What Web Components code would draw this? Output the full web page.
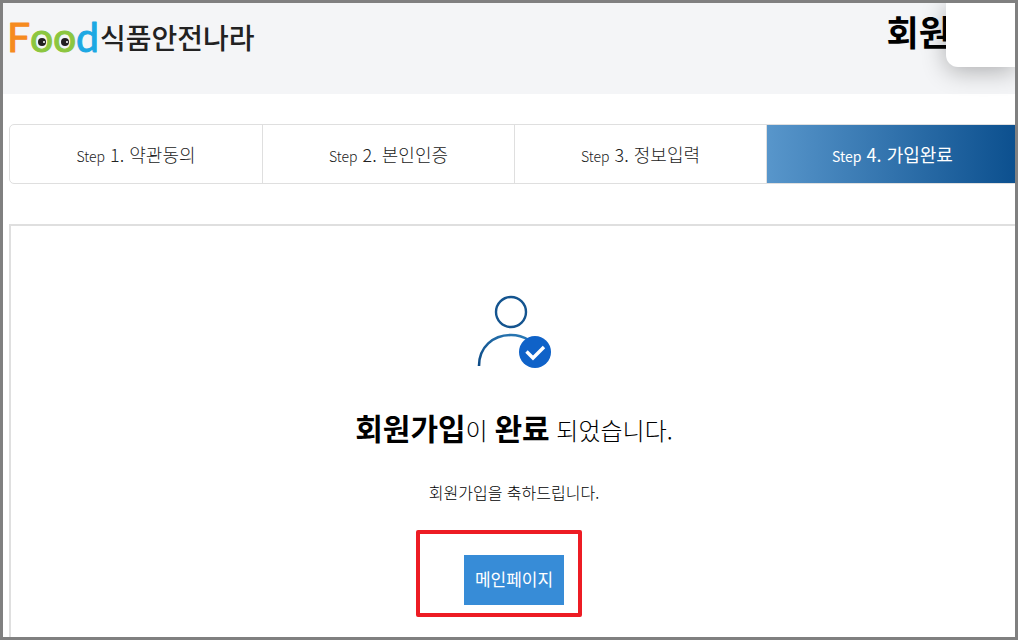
<!DOCTYPE html>
<html lang="ko">
<head>
<meta charset="utf-8">
<meta name="viewport" content="width=device-width, initial-scale=1">
<title>식품안전나라 - 회원가입</title>
<style>
  body {
    background-color: #ffffff;
    color: #000000;
    font-family: 'Noto Sans CJK KR', sans-serif;
    margin: 0;
  }

  food-complete b {
    font-size: 30px;
    font-weight: 700;
    line-height: 1;
  }
</style>
</head>
<body>
<food-page>
  <food-header slot="header">회원</food-header>
  <food-steps>
    <food-step number="1">약관동의</food-step>
    <food-step number="2">본인인증</food-step>
    <food-step number="3">정보입력</food-step>
    <food-step number="4" selected>가입완료</food-step>
  </food-steps>
  <food-complete>
    <span slot="title"><b>회원가입</b>이 <b>완료</b> 되었습니다.</span>
    <span slot="message">회원가입을 축하드립니다.</span>
    <food-button slot="action" marked>메인페이지</food-button>
  </food-complete>
</food-page>

<script>
class FoodPage extends HTMLElement {
  constructor() {
    super();

    const template = document.createElement( 'template' )
    template.innerHTML = /* template */ `
      <style>
        :host {
          border: solid 3px #808080;
          box-sizing: border-box;
          display: flex;
          flex-direction: column;
          min-height: 100vh;
          overflow: hidden;
        }

        main {
          display: flex;
          flex-direction: column;
          flex-grow: 1;
          gap: 40px;
          /* Runs on past the right edge */
          margin: 30px -4px 0 6px;
        }
      </style>
      <slot name="header"></slot>
      <main>
        <slot></slot>
      </main>
    `;

    // Root
    const shadowRoot = this.attachShadow( {mode: 'open'} );
    shadowRoot.appendChild( template.content.cloneNode( true ) );
  }
}

window.customElements.define( 'food-page', FoodPage );

class FoodLogo extends HTMLElement {
  constructor() {
    super();

    const template = document.createElement( 'template' )
    template.innerHTML = /* template */ `
      <style>
        :host {
          display: block;
        }

        a {
          align-items: center;
          color: #222222;
          display: flex;
          font-size: 28px;
          font-weight: 500;
          line-height: 40px;
          text-decoration: none;
        }

        svg {
          display: block;
          overflow: visible;
        }

        text {
          font-family: Lato, sans-serif;
          font-size: 41px;
          font-weight: 400;
          paint-order: stroke;
          stroke-linejoin: round;
          stroke-width: 1px;
        }
      </style>
      <a href="#">
        <svg width="91" height="56" viewBox="0 0 91 56" role="img">
          <text y="43" x="-2 21 44 67"><tspan fill="#f68b1f" stroke="#f68b1f">F</tspan><tspan fill="#8cc63f" stroke="#8cc63f">oo</tspan><tspan fill="#1ca8e3" stroke="#1ca8e3">d</tspan></text>
          <g fill="#231f20">
            <circle cx="33" cy="33" r="4"/>
            <circle cx="56" cy="33" r="4"/>
          </g>
          <g fill="#ffffff">
            <circle cx="35" cy="33" r="1"/>
            <circle cx="58" cy="33" r="1"/>
          </g>
        </svg>
        <span>식품안전나라</span>
      </a>
    `;

    // Root
    const shadowRoot = this.attachShadow( {mode: 'open'} );
    shadowRoot.appendChild( template.content.cloneNode( true ) );
  }
}

window.customElements.define( 'food-logo', FoodLogo );

class FoodHeader extends HTMLElement {
  constructor() {
    super();

    const template = document.createElement( 'template' )
    template.innerHTML = /* template */ `
      <style>
        :host {
          display: block;
          position: relative;
        }

        header {
          align-items: flex-start;
          background-color: #f4f5f7;
          box-sizing: border-box;
          display: flex;
          justify-content: space-between;
          min-height: 91px;
          padding: 6px 64px 0 6px;
        }

        h1 {
          font-size: 35px;
          font-weight: 700;
          line-height: 44px;
          margin: 0;
        }

        /* Bubble over the corner */
        aside {
          background-color: #ffffff;
          border-bottom-left-radius: 12px;
          box-shadow: 0 4px 24px rgba( 0, 0, 0, 0.30 );
          height: 64px;
          position: absolute;
          right: 0;
          top: 0;
          width: 69px;
        }
      </style>
      <header>
        <food-logo></food-logo>
        <h1><slot></slot></h1>
      </header>
      <aside></aside>
    `;

    // Root
    const shadowRoot = this.attachShadow( {mode: 'open'} );
    shadowRoot.appendChild( template.content.cloneNode( true ) );
  }
}

window.customElements.define( 'food-header', FoodHeader );

class FoodSteps extends HTMLElement {
  constructor() {
    super();

    const template = document.createElement( 'template' )
    template.innerHTML = /* template */ `
      <style>
        :host {
          display: block;
        }

        nav {
          border: solid 1px #dfdfdf;
          border-radius: 5px;
          display: grid;
          grid-template-columns: repeat( 4, 1fr );
          overflow: hidden;
        }
      </style>
      <nav>
        <slot></slot>
      </nav>
    `;

    // Root
    const shadowRoot = this.attachShadow( {mode: 'open'} );
    shadowRoot.appendChild( template.content.cloneNode( true ) );
  }
}

window.customElements.define( 'food-steps', FoodSteps );

class FoodStep extends HTMLElement {
  constructor() {
    super();

    const template = document.createElement( 'template' )
    template.innerHTML = /* template */ `
      <style>
        :host {
          border-left: solid 1px #dfdfdf;
          color: #222222;
          display: block;
          font-size: 18px;
          font-weight: 300;
          line-height: 58px;
          text-align: center;
        }

        :host( :first-child ) {
          border-left: none;
        }

        :host( [selected] ) {
          background-clip: padding-box;
          background-image: linear-gradient( to right, #5896cb, #0b4f8e );
          color: #ffffff;
          font-weight: 400;
        }

        small {
          font-size: 14px;
          line-height: 1;
        }
      </style>
      <small>Step</small> <span></span>. <slot></slot>
    `;

    // Root
    const shadowRoot = this.attachShadow( {mode: 'open'} );
    shadowRoot.appendChild( template.content.cloneNode( true ) );

    // Elements
    this.$number = shadowRoot.querySelector( 'span' );
  }

  // When things change
  _render() {
    this.$number.textContent = this.number;
  }

  // Setup
  connectedCallback() {
    this._render();
  }

  // Watched attributes
  static get observedAttributes() {
    return ['number'];
  }

  // Observed tag attribute has changed
  // Update render
  attributeChangedCallback( name, old, value ) {
    this._render();
  }

  // Attributes
  // Reflected
  get number() {
    return this.getAttribute( 'number' );
  }

  set number( value ) {
    this.setAttribute( 'number', value );
  }
}

window.customElements.define( 'food-step', FoodStep );

class FoodComplete extends HTMLElement {
  constructor() {
    super();

    const template = document.createElement( 'template' )
    template.innerHTML = /* template */ `
      <style>
        :host {
          display: flex;
          flex-grow: 1;
        }

        section {
          align-items: center;
          border: solid 2px #dfdfdf;
          border-bottom: none;
          display: flex;
          flex-direction: column;
          flex-grow: 1;
          padding: 64px 0 32px 0;
        }

        svg {
          display: block;
        }

        h2 {
          font-size: 24px;
          font-weight: 300;
          line-height: 40px;
          margin: 40px 0 30px 0;
        }

        p {
          font-size: 16px;
          font-weight: 300;
          line-height: 24px;
          margin: 0 0 51px 0;
        }
      </style>
      <section>
        <svg width="80" height="80" viewBox="0 0 80 80" fill="none">
          <defs>
            <linearGradient id="line" x1="0" y1="1" x2="1" y2="0">
              <stop offset="0" stop-color="#0d4a85"/>
              <stop offset="1" stop-color="#2c7cb8"/>
            </linearGradient>
          </defs>
          <circle cx="37" cy="22" r="15" stroke="#14548f" stroke-width="2.4"/>
          <path d="M5 76C5 57 19 45 37 45C43 45 49 46.5 55 50" stroke="url(#line)" stroke-width="2.6"/>
          <circle cx="61" cy="62" r="16" fill="#0f62c8"/>
          <path d="M52.5 61.5L59 68L70 57" stroke="#ffffff" stroke-width="3.4"/>
        </svg>
        <h2><slot name="title"></slot></h2>
        <p><slot name="message"></slot></p>
        <slot name="action"></slot>
      </section>
    `;

    // Root
    const shadowRoot = this.attachShadow( {mode: 'open'} );
    shadowRoot.appendChild( template.content.cloneNode( true ) );
  }
}

window.customElements.define( 'food-complete', FoodComplete );

class FoodButton extends HTMLElement {
  constructor() {
    super();

    const template = document.createElement( 'template' )
    template.innerHTML = /* template */ `
      <style>
        :host {
          display: block;
          position: relative;
        }

        /* Hand placed highlight */
        :host( [marked] )::after {
          border: solid 4px #ed1c24;
          border-radius: 2px;
          content: '';
          inset: -25px -18px -12px -48px;
          pointer-events: none;
          position: absolute;
        }

        button {
          background-color: #378cd7;
          border: none;
          color: #ffffff;
          cursor: pointer;
          display: block;
          font-family: inherit;
          font-size: 17px;
          font-weight: 400;
          line-height: 24px;
          min-width: 100px;
          padding: 12px 10px 14px 10px;
        }
      </style>
      <button type="button"><slot></slot></button>
    `;

    // Root
    const shadowRoot = this.attachShadow( {mode: 'open'} );
    shadowRoot.appendChild( template.content.cloneNode( true ) );
  }
}

window.customElements.define( 'food-button', FoodButton );
</script>
</body>
</html>
